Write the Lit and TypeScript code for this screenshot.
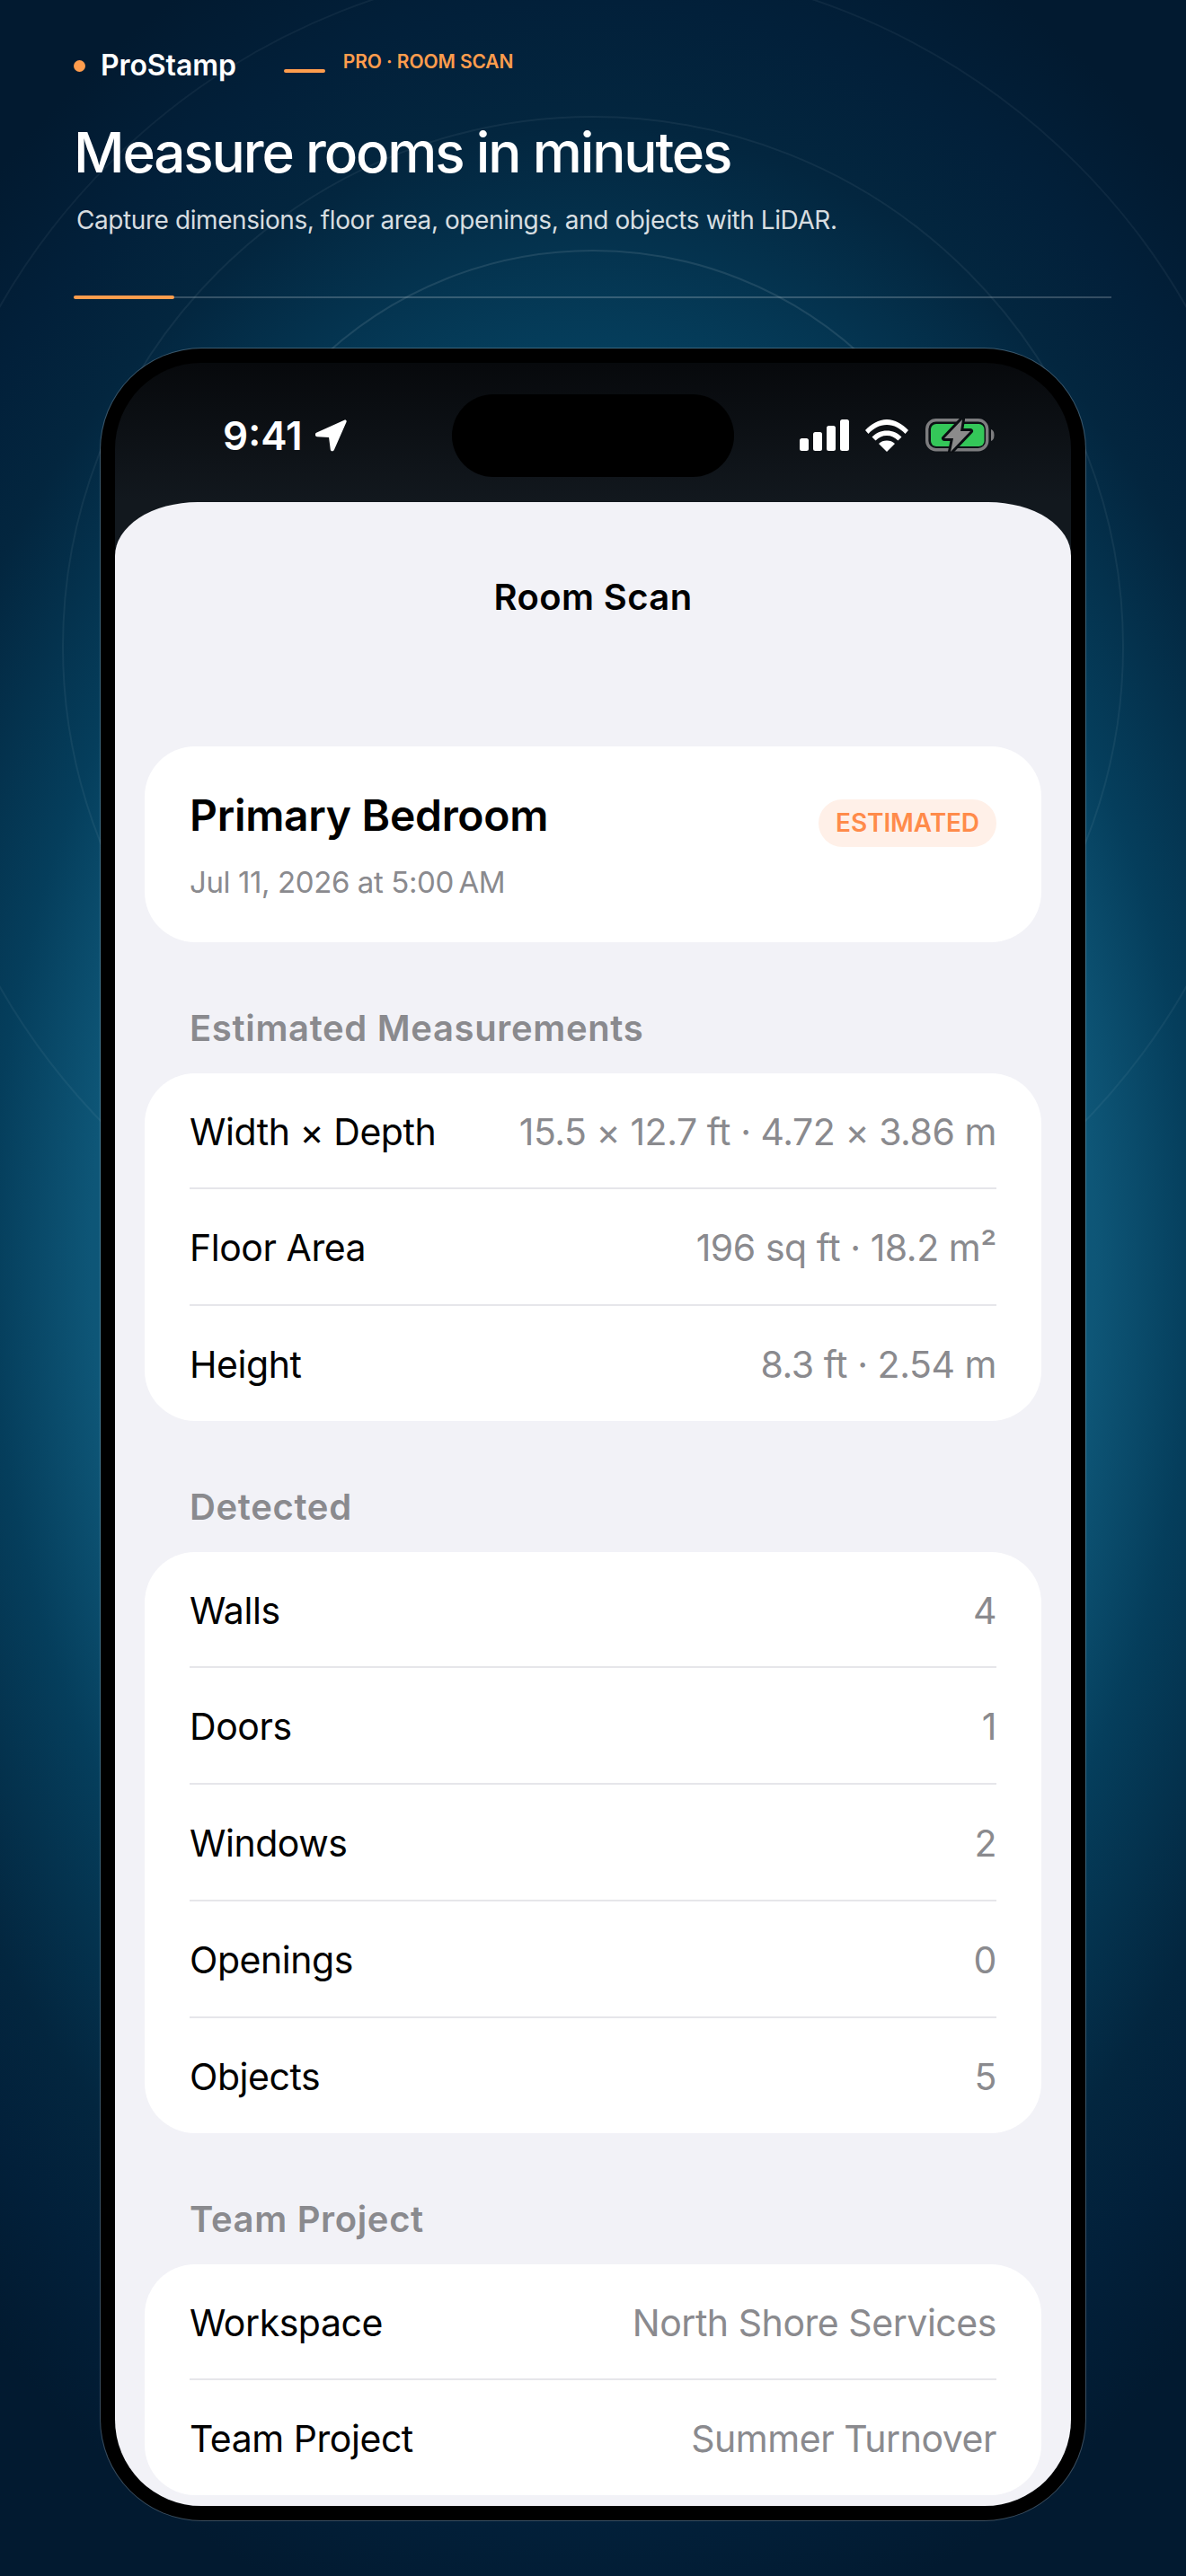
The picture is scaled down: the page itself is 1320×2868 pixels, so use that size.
import { LitElement, html, css, svg } from "lit";
import { customElement } from "lit/decorators.js";

type Row = [string, string];
const measurements: Row[] = [
  ["Width × Depth", "15.5 × 12.7 ft · 4.72 × 3.86 m"],
  ["Floor Area", "196 sq ft · 18.2 m²"],
  ["Height", "8.3 ft · 2.54 m"],
];
const detected: Row[] = [
  ["Walls", "4"],
  ["Doors", "1"],
  ["Windows", "2"],
  ["Openings", "0"],
  ["Objects", "5"],
];
const team: Row[] = [
  ["Workspace", "North Shore Services"],
  ["Team Project", "Summer Turnover"],
];

@customElement("app-root")
export class AppRoot extends LitElement {
  static styles = css`
    :host {
      display: block;
      position: relative;
      width: 1320px;
      height: 2868px;
      overflow: hidden;
      font-family: Inter, "Liberation Sans", sans-serif;
      background: radial-gradient(ellipse 930px 1400px at 50% 1400px, #0f5d80 0%, #0e5677 60%, #053e5c 72%, #03263f 90%, #02203a 100%, #021a30 112%);
    }
    * { box-sizing: border-box; }
    .rings { position: absolute; inset: 0; width: 1320px; height: 2868px; pointer-events: none; }
    .page { position: relative; display: flex; flex-direction: column; height: 100%; padding: 0 83px 0 82px; }
    .top { display: flex; align-items: flex-start; padding-top: 52px; height: 134px; }
    .brand { display: flex; align-items: center; gap: 17px; color: #fff; font-size: 32px; font-weight: 600; letter-spacing: -0.1px; line-height: 42px; }
    .dot { width: 13px; height: 13px; border-radius: 50%; background: #ff9d4d; }
    .dash { width: 46px; height: 4px; border-radius: 2px; background: #ff9d4d; margin: 25px 20px 0 53px; }
    .eyebrow { color: #ff9d4d; font-size: 21px; font-weight: 600; letter-spacing: -0.1px; line-height: 26px; margin-top: 4px; }
    h1 { margin: 0; color: #fff; font-size: 62px; font-weight: 500; letter-spacing: -2.15px; line-height: 72px; }
    .sub { margin: 21px 0 0 3px; color: rgba(255, 255, 255, 0.85); font-size: 28px; font-weight: 400; letter-spacing: -0.42px; line-height: 36px; }
    .rule { position: relative; margin-top: 67px; height: 2px; background: rgba(255, 255, 255, 0.2); }
    .rule::before { content: ""; position: absolute; left: 0; top: -1px; width: 112px; height: 4px; border-radius: 2px; background: #ff9d4d; }
    .phone {
      width: 1096px; height: 2418px; margin: 56px 0 0 30px; flex: none;
      background: #000; border-radius: 113px; padding: 16px;
      box-shadow: 0 0 0 1px rgba(255, 255, 255, 0.22);
    }
    .screen { height: 100%; border-radius: 96px; overflow: hidden; background: linear-gradient(180deg, #07090c 0%, #12181e 155px); display: flex; flex-direction: column; }
    .status { flex: none; height: 155px; display: grid; grid-template-columns: 1fr 314px 1fr; padding-top: 35px; align-items: start; }
    .left { display: flex; align-items: center; height: 92px; padding-left: 120px; gap: 14px; color: #fff; font-size: 44px; font-weight: 600; }
    .island { width: 314px; height: 92px; border-radius: 46px; background: #000; }
    .right { display: flex; align-items: center; justify-content: flex-end; height: 92px; padding-right: 85px; }
    .right svg { display: block; }
    .sheet { flex: 1; background: #f2f2f7; border-radius: 92px 92px 0 0 / 60px 60px 0 0; padding: 0 33px; min-height: 0; }
    .nav { height: 104px; padding-top: 79px; text-align: center; color: #000; font-size: 40px; font-weight: 600; line-height: 54px; letter-spacing: 0.4px; box-sizing: content-box; }
    .hero { margin-top: 89px; height: 218px; background: #fff; border-radius: 56px; padding: 48px 50px 0; }
    .hero-top { display: flex; justify-content: space-between; align-items: flex-start; }
    .hero h2 { margin: 0; color: #000; font-size: 48px; font-weight: 600; line-height: 58px; letter-spacing: -0.3px; }
    .badge { margin-top: 11px; height: 53px; padding: 0 19px; border-radius: 27px; background: #fff0e8; color: #ff8b4a; font-size: 28px; font-weight: 600; line-height: 53px; letter-spacing: -0.1px; }
    .date { margin-top: 19px; color: #8a8a8e; font-size: 33px; line-height: 40px; letter-spacing: -0.4px; }
    .head { padding: 71px 50px 0; height: 146px; color: #8a8a8e; font-size: 40px; font-weight: 600; line-height: 50px; letter-spacing: 0.65px; }
    .card { background: #fff; border-radius: 56px; padding: 0 50px; }
    .row { height: 130px; padding-top: 1px; display: flex; justify-content: space-between; align-items: center; border-top: 2px solid #e6e6ea; font-size: 41px; line-height: 50px; letter-spacing: -0.45px; }
    .row:first-child { border-top: 0; height: 127px; padding-top: 2px; }
    .label { color: #000; }
    .value { color: #8a8a8e; }
  `;

  private rows(items: Row[]) {
    return html`<div class="card">
      ${items.map(([l, v]) => html`<div class="row"><span class="label">${l}</span><span class="value">${v}</span></div>`)}
    </div>`;
  }

  render() {
    return html`
      <svg class="rings" viewBox="0 0 1320 2868" fill="none">
        ${[441, 590, 761].map(
          (r, i) => svg`<circle cx="660" cy="720" r=${r} stroke="#fff" stroke-opacity=${[0.1, 0.06, 0.05][i]} stroke-width="2"/>`
        )}
      </svg>
      <div class="page">
        <div class="top">
          <div class="brand"><span class="dot"></span><span>ProStamp</span></div>
          <span class="dash"></span>
          <span class="eyebrow">PRO · ROOM SCAN</span>
        </div>
        <h1>Measure rooms in minutes</h1>
        <p class="sub">Capture dimensions, floor area, openings, and objects with LiDAR.</p>
        <div class="rule"></div>
        <div class="phone">
          <div class="screen">
            <div class="status">
              <div class="left">
                <span>9:41</span>
                <svg width="36" height="36" viewBox="2.500 2 33 33"><path d="M3.500 15.600 32 2.600c1.600-.7 2.800.6 2.100 2.100L21.600 33.200c-.9 1.900-3.400 1.500-3.700-.6l-1.600-12.200L4.300 19.600c-2.200-.2-2.700-3.100-.8-4z" fill="#fff"/></svg>
              </div>
              <div class="island"></div>
              <div class="right">
                <svg width="217" height="38" viewBox="0 0 217 38">
                  <g fill="#fff">
                    <rect x="0" y="22" width="10" height="14" rx="2.500"/>
                    <rect x="15" y="15" width="10" height="21" rx="2.500"/>
                    <rect x="30" y="8" width="10" height="28" rx="2.500"/>
                    <rect x="45" y="1" width="10" height="35" rx="2.500"/>
                    <path d="M73 13C79.500 6 88 1 97 1s17.500 5 24 12l-3.500 4C112 11 105 7 97 7s-15 4-20.500 10z"/>
                    <path d="M80.500 20.500c4.500-4.500 10-7 16.500-7s12 2.500 16.500 7l-4 4c-3.500-3.500-7.500-5.500-12.500-5.500s-9 2-12.500 5.500z"/>
                    <path d="M88 28c2.500-2.500 5.500-3.500 9-3.500s6.500 1 9 3.500l-9 9z"/>
                  </g>
                  <rect x="141.700" y="1.700" width="67" height="33" rx="10" fill="none" stroke="#7d7d7f" stroke-width="3.400"/>
                  <rect x="146" y="6" width="59.500" height="25" rx="6" fill="#34c759"/>
                  <path d="M213 12c2 .5 3.500 2.500 3.500 6.500s-1.500 6-3.500 6.500z" fill="#7d7d7f"/>
                  <path d="M181 1 161 22h10l-3 15 22-23h-11z" fill="#8b8b8b" stroke="#0b0e12" stroke-width="6" stroke-linejoin="round" paint-order="stroke"/>
                </svg>
              </div>
            </div>
            <div class="sheet">
              <div class="nav">Room Scan</div>
              <div class="hero">
                <div class="hero-top">
                  <h2>Primary Bedroom</h2>
                  <span class="badge">ESTIMATED</span>
                </div>
                <div class="date">Jul 11, 2026 at 5:00\u202fAM</div>
              </div>
              <div class="head">Estimated Measurements</div>
              ${this.rows(measurements)}
              <div class="head">Detected</div>
              ${this.rows(detected)}
              <div class="head">Team Project</div>
              ${this.rows(team)}
            </div>
          </div>
        </div>
      </div>
    `;
  }
}
